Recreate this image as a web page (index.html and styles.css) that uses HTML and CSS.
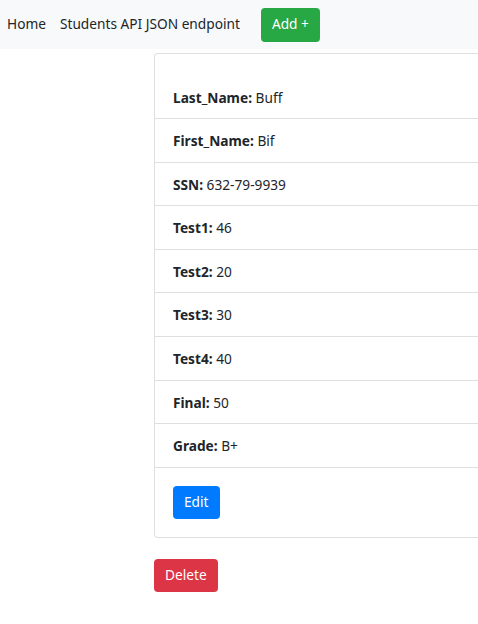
FILE: index.html
```html
<!DOCTYPE html>
<html>
<head>
<meta charset="utf-8">
<link rel="stylesheet" href="styles.css">
</head>
<body>
<nav class="navbar">
  <a class="nav-link" href="#">Home</a>
  <a class="nav-link" href="#">Students API JSON endpoint</a>
  <a class="btn btn-success add" href="#">Add +</a>
</nav>
<main class="content">
  <div class="card">
    <ul class="list">
      <li class="item first"><b>Last_Name:</b> Buff</li>
      <li class="item"><b>First_Name:</b> Bif</li>
      <li class="item"><b>SSN:</b> 632-79-9939</li>
      <li class="item"><b>Test1:</b> 46</li>
      <li class="item"><b>Test2:</b> 20</li>
      <li class="item"><b>Test3:</b> 30</li>
      <li class="item"><b>Test4:</b> 40</li>
      <li class="item"><b>Final:</b> 50</li>
      <li class="item"><b>Grade:</b> B+</li>
    </ul>
    <div class="card-body">
      <a class="btn btn-primary" href="#">Edit</a>
    </div>
  </div>
  <div class="actions">
    <a class="btn btn-danger" href="#">Delete</a>
  </div>
</main>
</body>
</html>
```
FILE: styles.css
```css
html, body {
  margin: 0;
  padding: 0;
  overflow: hidden;
}
body {
  font-family: "Noto Sans", "Open Sans", sans-serif;
  font-size: 13.7px;
  color: #212529;
  background: #fff;
  line-height: 1.5;
}
a { text-decoration: none; }
.navbar {
  background: #f8f9fa;
  height: 49px;
  display: flex;
  align-items: center;
  padding: 0 0 0 7px;
  box-sizing: border-box;
}
.nav-link {
  color: #212529;
  margin-right: 14px;
}
.nav-link + .nav-link { margin-right: 21px; }
.btn {
  display: inline-flex;
  align-items: center;
  justify-content: center;
  color: #fff;
  border-radius: 4px;
  height: 33px;
  padding: 0 11px;
  box-sizing: border-box;
  font-size: 13.7px;
}
.add { height: 34px; padding: 0 11px; }
.btn-success { background: #28a745; }
.btn-primary { background: #007bff; }
.btn-danger { background: #dc3545; }
.content {
  padding-left: 154px;
  padding-top: 4px;
  overflow: hidden;
}
.card {
  width: 324px;
  border: 1px solid #dfdfdf;
  border-right: 0;
  border-radius: 4px 0 0 4px;
  box-sizing: border-box;
}
.list {
  list-style: none;
  margin: 0;
  padding: 0;
}
.item {
  padding: 11px 18px;
  line-height: 21px;
  border-bottom: 1px solid #dfdfdf;
  height: 43.6px;
  box-sizing: border-box;
}
.item b { font-weight: 700; }
.item.first {
  height: 65px;
  padding-top: 33px;
}
.card-body {
  padding: 18px 18px 18px;
  display: flex;
}
.actions {
  margin-top: 21px;
  padding-bottom: 20px;
}
```
